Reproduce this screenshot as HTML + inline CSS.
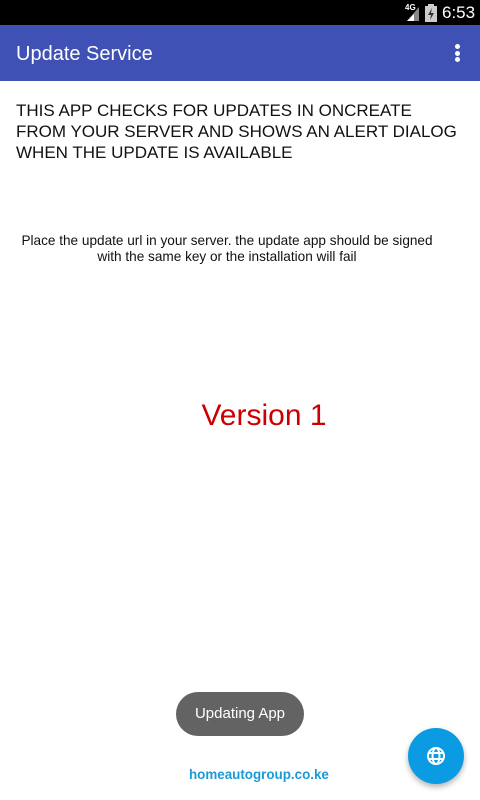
<!DOCTYPE html>
<html><head><meta charset="utf-8"><style>
body{margin:0;width:480px;height:800px;position:relative;background:#fff;font-family:"Liberation Sans",sans-serif;overflow:hidden}
.sb{position:absolute;left:0;top:0;width:480px;height:25px;background:#000;color:#fff}
.ab{position:absolute;left:0;top:25px;width:480px;height:56px;background:#3F51B5;color:#fff}
.t{position:absolute;left:16px;top:18px;font-size:20px}
.h{position:absolute;left:16px;top:100px;font-size:17px;line-height:21px;color:#111;white-space:nowrap}
.s{position:absolute;left:0;width:454px;top:233px;font-size:13.6px;line-height:16px;text-align:center;color:#111}
.v{position:absolute;left:0;width:528px;top:399px;font-size:30px;text-align:center;color:#cc0000}
.toast{position:absolute;left:176px;top:692px;width:128px;height:44px;border-radius:22px;background:#636363;color:#fff;font-size:15px;line-height:44px;text-align:center}
.l{position:absolute;left:189px;top:767px;font-size:13.4px;font-weight:bold;color:#1a9bd7}
.fab{position:absolute;left:408px;top:728px;width:56px;height:56px;border-radius:50%;background:#0a9be3;box-shadow:0 3px 6px rgba(0,0,0,.3)}
</style></head><body>
<div class="sb">
<span style="position:absolute;left:405px;top:3px;font-size:8px;font-weight:bold">4G</span>
<svg style="position:absolute;left:405px;top:5px" width="16" height="16"><polygon points="2,16 14,16 14,2" fill="#888"/><polygon points="2,16 9,16 9,9" fill="#fff"/></svg>
<svg style="position:absolute;left:425px;top:4px" width="12" height="18"><rect x="3" y="0" width="6" height="2" fill="#ccc"/><rect x="0" y="2" width="12" height="16" fill="#ccc"/><polygon points="7,4 3,11 6,11 5,16 9,9 6,9" fill="#333"/></svg>
<span style="position:absolute;left:442px;top:3px;font-size:17px">6:53</span>
</div>
<div class="ab"><div class="t">Update Service</div>
<div style="position:absolute;left:455px;top:19px;width:5px;height:5px;border-radius:50%;background:#fff"></div>
<div style="position:absolute;left:455px;top:26px;width:5px;height:5px;border-radius:50%;background:#fff"></div>
<div style="position:absolute;left:455px;top:32px;width:5px;height:5px;border-radius:50%;background:#fff"></div>
</div>
<div class="h">THIS APP CHECKS FOR UPDATES IN ONCREATE<br>FROM YOUR SERVER AND SHOWS AN ALERT DIALOG<br>WHEN THE UPDATE IS AVAILABLE</div>
<div class="s">Place the update url in your server. the update app should be signed<br>with the same key or the installation will fail</div>
<div class="v">Version 1</div>
<div class="toast">Updating App</div>
<div class="l">homeautogroup.co.ke</div>
<div class="fab"><svg style="position:absolute;left:18px;top:18px" width="20" height="20" viewBox="0 0 20 20" fill="none" stroke="#fff" stroke-width="2"><circle cx="10" cy="10" r="8"/><ellipse cx="10" cy="10" rx="3.5" ry="8"/><line x1="2" y1="7" x2="18" y2="7"/><line x1="2" y1="13" x2="18" y2="13"/></svg></div>
</body></html>
